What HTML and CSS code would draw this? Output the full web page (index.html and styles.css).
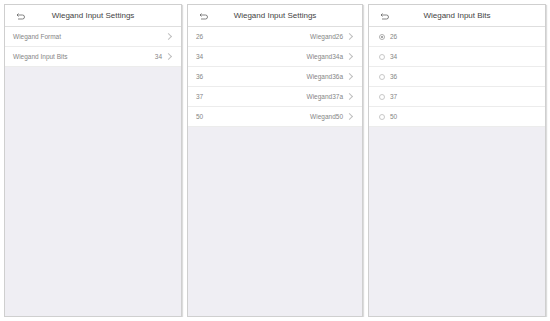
FILE: index.html
```html
<!DOCTYPE html>
<html lang="en">

<head>
    <meta charset="UTF-8">
    <title>Wiegand Settings</title>
    <link rel="stylesheet" href="styles.css">
</head>

<body>
    <div class="screens">
        <div class="screen">
            <div class="header">
                <svg class="back" viewBox="0 0 10 8"><path d="M2.5 1.5 L1 3 L2.5 4.5 M1 3 H6.5 A2 2 0 0 1 6.5 7 H2" /></svg>
                <span class="title">Wiegand Input Settings</span>
            </div>
            <div class="row"><span class="label">Wiegand Format</span><span class="value"></span><span class="chev"></span></div>
            <div class="row"><span class="label">Wiegand Input Bits</span><span class="value">34</span><span class="chev"></span></div>
        </div>

        <div class="screen mid">
            <div class="header">
                <svg class="back" viewBox="0 0 10 8"><path d="M2.5 1.5 L1 3 L2.5 4.5 M1 3 H6.5 A2 2 0 0 1 6.5 7 H2" /></svg>
                <span class="title">Wiegand Input Settings</span>
            </div>
            <div class="row"><span class="label">26</span><span class="value">Wiegand26</span><span class="chev"></span></div>
            <div class="row"><span class="label">34</span><span class="value">Wiegand34a</span><span class="chev"></span></div>
            <div class="row"><span class="label">36</span><span class="value">Wiegand36a</span><span class="chev"></span></div>
            <div class="row"><span class="label">37</span><span class="value">Wiegand37a</span><span class="chev"></span></div>
            <div class="row"><span class="label">50</span><span class="value">Wiegand50</span><span class="chev"></span></div>
        </div>

        <div class="screen">
            <div class="header">
                <svg class="back" viewBox="0 0 10 8"><path d="M2.5 1.5 L1 3 L2.5 4.5 M1 3 H6.5 A2 2 0 0 1 6.5 7 H2" /></svg>
                <span class="title">Wiegand Input Bits</span>
            </div>
            <div class="row radio-row"><span class="radio checked"></span><span class="label">26</span></div>
            <div class="row radio-row"><span class="radio"></span><span class="label">34</span></div>
            <div class="row radio-row"><span class="radio"></span><span class="label">36</span></div>
            <div class="row radio-row"><span class="radio"></span><span class="label">37</span></div>
            <div class="row radio-row"><span class="radio"></span><span class="label">50</span></div>
        </div>
    </div>
</body>

</html>
```

FILE: styles.css
```css
body {
    margin: 0;
    background: #ffffff;
    font-family: "Liberation Sans", Arial, sans-serif;
}

.screens {
    display: flex;
    gap: 5px;
    padding: 4px 3px 0 4px;
    height: 313px;
}

.screen {
    width: 176px;
    background: #efeef3;
    border: 1px solid #cfcfcf;
    box-shadow: 1px 1px 1px #dcdcdc;
    display: flex;
    flex-direction: column;
}

.screen.mid {
    width: 174px;
}

.header {
    height: 21px;
    background: #ffffff;
    border-bottom: 1px solid #dedede;
    display: flex;
    align-items: center;
    justify-content: center;
    position: relative;
}

.back {
    position: absolute;
    left: 11px;
    top: 7px;
    width: 10px;
    height: 8px;
    fill: none;
    stroke: #666;
    stroke-width: 0.8;
}

.title {
    font-size: 8px;
    color: #444;
}

.row {
    height: 19px;
    background: #ffffff;
    border-bottom: 1px solid #ececec;
    display: flex;
    align-items: center;
    padding: 0 8px 0 8px;
    font-size: 6.5px;
    color: #858585;
}

.label {
    flex: 1;
}

.value {
    margin-right: 4px;
}

.chev {
    width: 4px;
    height: 4px;
    border-top: 0.6px solid #c0c0c0;
    border-right: 0.6px solid #c0c0c0;
    transform: rotate(45deg);
    margin-right: 2px;
}

.radio-row {
    padding-left: 10px;
}

.radio {
    width: 4px;
    height: 4px;
    border: 0.6px solid #c8c8c8;
    border-radius: 50%;
    margin-right: 5px;
}

.radio.checked {
    border-color: #b0b0b0;
    background: radial-gradient(circle, #a8a8a8 40%, transparent 45%);
}
```
